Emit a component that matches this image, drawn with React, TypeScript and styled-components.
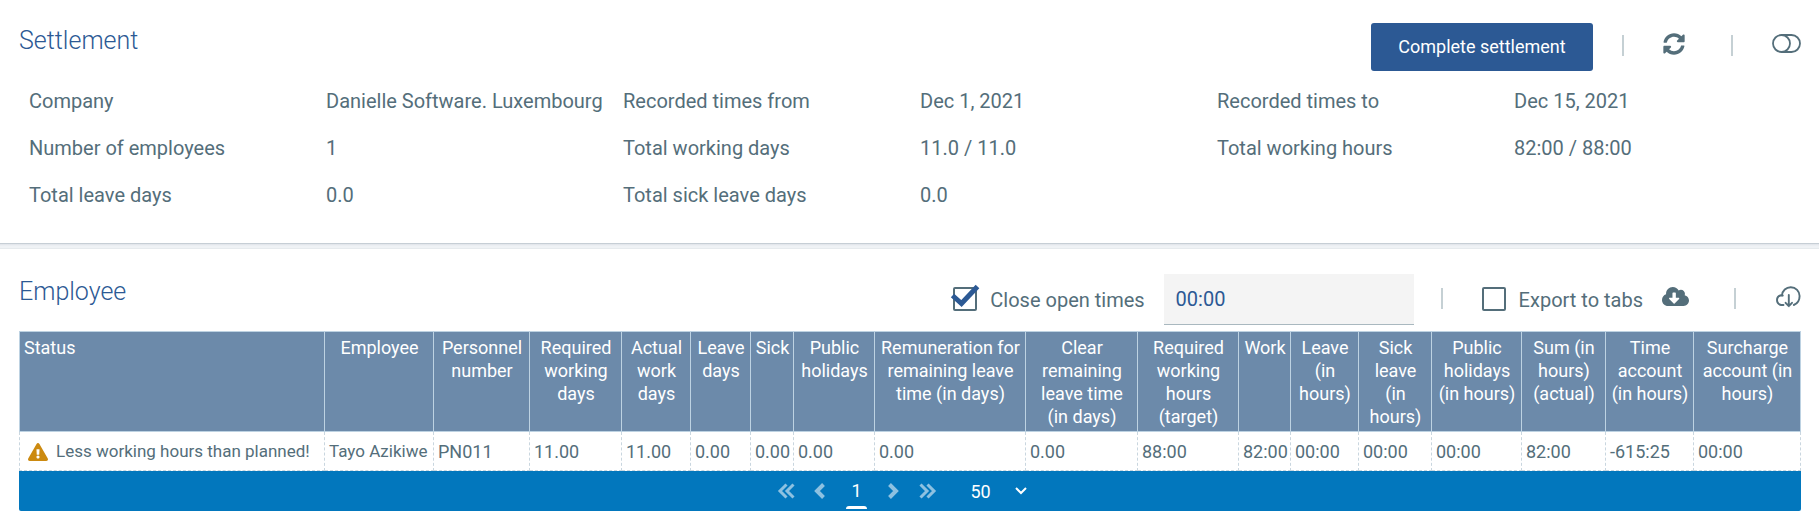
import React, { useState } from "react";
import styled, { createGlobalStyle, css } from "styled-components";
import { FaSyncAlt, FaCloudDownloadAlt, FaExclamationTriangle } from "react-icons/fa";

const GlobalStyle = createGlobalStyle`
  *, *::before, *::after { box-sizing: border-box; }
  body {
    margin: 0;
    background: #fff;
    color: #546e7a;
    font-family: Roboto, "Liberation Sans", sans-serif;
    font-size: 20px;
  }
  button, input, select { font: inherit; color: inherit; }
`;

const Section = styled.section<{ $top: number }>`
  padding: ${(p) => p.$top}px 18px 0 19px;
`;

const SectionHeader = styled.header<{ $height: number }>`
  display: flex;
  justify-content: space-between;
  align-items: flex-start;
  height: ${(p) => p.$height}px;
`;

const Title = styled.h2`
  margin: 0;
  font-size: 25px;
  font-weight: 300;
  line-height: 36px;
  color: #2c5994;
`;

const Toolbar = styled.div`
  display: flex;
  align-items: center;
`;

const PrimaryButton = styled.button`
  height: 48px;
  min-width: 222px;
  padding: 0 27px 2px;
  border: 0;
  border-radius: 3px;
  background: #2c5994;
  color: #fff;
  font-size: 18px;
  cursor: pointer;
`;

const Separator = styled.span<{ $left: number; $right: number }>`
  width: 2px;
  height: 21px;
  margin: 0 ${(p) => p.$right}px 3px ${(p) => p.$left}px;
  background: #c5d0d4;
`;

const IconButton = styled.button<{ $gap?: number }>`
  display: flex;
  padding: 0;
  margin: 0 0 6px ${(p) => p.$gap ?? 0}px;
  border: 0;
  background: none;
  cursor: pointer;
`;

const Facts = styled.dl`
  display: grid;
  grid-template-columns: repeat(6, 1fr);
  margin: 0;
  padding: 7px 0 24px;
`;

const cell = css`
  margin: 0;
  padding-left: 10px;
  line-height: 47px;
  white-space: nowrap;
`;
const Term = styled.dt`${cell}`;
const Value = styled.dd`${cell}`;

const Divider = styled.hr`
  height: 6px;
  margin: 0;
  border: 0;
  border-top: 1px solid #c6ced5;
  border-bottom: 1px solid #e6eaed;
  background: linear-gradient(#dfe3e8, #eff2f5 50%);
`;

const CheckLabel = styled.label`
  display: flex;
  align-items: center;
  gap: 13px;
  cursor: pointer;
`;

const CheckWrap = styled.span`
  position: relative;
  display: flex;
  margin-bottom: 2px;
`;

const CheckInput = styled.input`
  appearance: none;
  width: 24px;
  height: 24px;
  margin: 0;
  border: 2px solid #546e7a;
  border-radius: 2px;
  background: #fff;
`;

const Tick = styled.svg`
  position: absolute;
  left: -3px;
  top: -3px;
  pointer-events: none;
`;

const TimeInput = styled.input`
  width: 250px;
  height: 51px;
  margin: 0 0 0 19px;
  padding: 0 12px;
  border: 0;
  border-bottom: 1px solid #a9b8bf;
  background: #f4f4f4;
  color: #2c5994;
`;

const Table = styled.table`
  width: 100%;
  table-layout: fixed;
  border-collapse: separate;
  border-spacing: 0;
  font-size: 18px;
  line-height: 23px;
`;

const Th = styled.th`
  height: 101px;
  padding: 4px 3px 3px 4px;
  border: 1px solid #bdd2e2;
  border-left-width: 0;
  background: #6c8aaa;
  color: #fff;
  font-weight: 400;
  vertical-align: top;
  &:first-child {
    border-left-width: 1px;
    text-align: left;
  }
`;

const Td = styled.td<{ $words: boolean }>`
  height: 39px;
  padding: 1px 0 0 4px;
  border: 1px dashed #c9d6df;
  border-width: 0 1px 1px 0;
  font-size: ${(p) => (p.$words ? 17 : 18)}px;
  white-space: nowrap;
  &:first-child { border-left-width: 1px; }
`;

const Status = styled.span`
  display: flex;
  align-items: center;
  gap: 8px;
  padding-left: 4px;
`;

const Pager = styled.nav`
  display: flex;
  justify-content: center;
  align-items: center;
  height: 40px;
  border-radius: 0 0 2px 2px;
  background: #0277bd;
  color: #fff;
  font-size: 18px;
`;

const PageStep = styled.button`
  display: flex;
  justify-content: center;
  width: 34px;
  padding: 0;
  border: 0;
  background: none;
  opacity: 0.55;
`;

const Page = styled.button`
  display: flex;
  flex-direction: column;
  justify-content: flex-end;
  align-items: center;
  height: 40px;
  width: 40px;
  padding: 0 0 2px;
  border: 0;
  background: none;
  line-height: 30px;
  &::after {
    content: "";
    width: 21px;
    height: 3px;
    border-radius: 3px 3px 0 0;
    background: #fff;
  }
`;

const PageSize = styled.label`
  display: flex;
  align-items: center;
  margin-left: 26px;
  padding-right: 25px;
`;

const SizeSelect = styled.select`
  appearance: none;
  width: 44px;
  padding: 0;
  border: 0;
  background: transparent;
  color: #fff;
  option { color: #333; }
`;

const facts: [string, string][] = [
  ["Company", "Danielle Software. Luxembourg"],
  ["Recorded times from", "Dec 1, 2021"],
  ["Recorded times to", "Dec 15, 2021"],
  ["Number of employees", "1"],
  ["Total working days", "11.0 / 11.0"],
  ["Total working hours", "82:00 / 88:00"],
  ["Total leave days", "0.0"],
  ["Total sick leave days", "0.0"],
];

const columns: { name: string; width: number; value: string }[] = [
  { name: "Status", width: 306, value: "Less working hours than planned!" },
  { name: "Employee", width: 109, value: "Tayo Azikiwe" },
  { name: "Personnel number", width: 96, value: "PN011" },
  { name: "Required working days", width: 92, value: "11.00" },
  { name: "Actual work days", width: 69, value: "11.00" },
  { name: "Leave days", width: 60, value: "0.00" },
  { name: "Sick", width: 43, value: "0.00" },
  { name: "Public holidays", width: 81, value: "0.00" },
  { name: "Remuneration for remaining leave time (in days)", width: 151, value: "0.00" },
  { name: "Clear remaining leave time (in days)", width: 112, value: "0.00" },
  { name: "Required working hours (target)", width: 101, value: "88:00" },
  { name: "Work", width: 52, value: "82:00" },
  { name: "Leave (in hours)", width: 68, value: "00:00" },
  { name: "Sick leave (in hours)", width: 73, value: "00:00" },
  { name: "Public holidays (in hours)", width: 90, value: "00:00" },
  { name: "Sum (in hours) (actual)", width: 84, value: "82:00" },
  { name: "Time account (in hours)", width: 88, value: "-615:25" },
  { name: "Surcharge account (in hours)", width: 107, value: "00:00" },
];

const ToggleIcon = () => (
  <svg width="29" height="20" viewBox="0 0 29 20" fill="none" stroke="#546e7a" strokeWidth="1.8">
    <rect x="1" y="1" width="27" height="17" rx="8.5" />
    <path d="M9.5 1a8.500 8.500 0 0 1 0 17" />
  </svg>
);

const CloudOutlineIcon = () => (
  <svg width="26" height="22" viewBox="0 0 26 22" fill="none" stroke="#546e7a" strokeWidth="1.9" strokeLinecap="round" strokeLinejoin="round">
    <path d="M8.5 19H6A5 5 0 0 1 6 9.2c.6 0 1.2.1 1.7.4" />
    <path d="M7 9.4A8.7 8.7 0 0 1 15.8 1.2c5 0 8.8 4 8.8 8.8 0 4.200-2.200 7.600-5.800 9" />
    <path d="M13.8 9v11M10.6 16.8l3.200 3.400 3.200-3.400" />
  </svg>
);

const Chevrons = ({ double, right }: { double?: boolean; right?: boolean }) => (
  <svg width={double ? 18 : 11} height="16" viewBox={double ? "0 0 18 16" : "0 0 11 16"} fill="none" stroke="#fff" strokeWidth={double ? 3 : 4}>
    <g transform={right ? `translate(${double ? 18 : 11} 0) scale(-1 1)` : undefined}>
      <path d="M9.5 1.5L3 8l6.500 6.500" />
      {double && <path d="M16.5 1.5L10 8l6.500 6.500" />}
    </g>
  </svg>
);

function Checkbox({ label, initial }: { label: string; initial: boolean }) {
  const [on, setOn] = useState(initial);
  return (
    <CheckLabel>
      <CheckWrap>
        <CheckInput type="checkbox" checked={on} onChange={(e) => setOn(e.target.checked)} />
        {on && (
          <Tick width="30" height="24" viewBox="0 0 30 24" fill="none" stroke="#2c5994" strokeWidth="5">
            <path d="M2.5 11.5l9 8L27.5 2.5" />
          </Tick>
        )}
      </CheckWrap>
      {label}
    </CheckLabel>
  );
}

export default function App() {
  return (
    <>
      <GlobalStyle />
      <Section $top={23}>
        <SectionHeader $height={48}>
          <Title>Settlement</Title>
          <Toolbar>
            <PrimaryButton>Complete settlement</PrimaryButton>
            <Separator $left={29} $right={39} />
            <IconButton aria-label="Refresh"><FaSyncAlt size={22} /></IconButton>
            <Separator $left={46} $right={39} />
            <IconButton aria-label="Toggle view"><ToggleIcon /></IconButton>
          </Toolbar>
        </SectionHeader>
        <Facts>
          {facts.map(([term, value]) => (
            <React.Fragment key={term}>
              <Term>{term}</Term>
              <Value>{value}</Value>
            </React.Fragment>
          ))}
        </Facts>
      </Section>
      <Divider />
      <Section $top={25}>
        <SectionHeader $height={57}>
          <Title>Employee</Title>
          <Toolbar>
            <Checkbox label="Close open times" initial />
            <TimeInput aria-label="Closing time" defaultValue="00:00" />
            <Separator $left={27} $right={39} />
            <Checkbox label="Export to tabs" initial={false} />
            <IconButton $gap={19} aria-label="Download export"><FaCloudDownloadAlt size={27} /></IconButton>
            <Separator $left={45} $right={39} />
            <IconButton aria-label="Download"><CloudOutlineIcon /></IconButton>
          </Toolbar>
        </SectionHeader>
        <Table>
          <colgroup>
            {columns.map((c) => (
              <col key={c.name} style={{ width: c.width }} />
            ))}
          </colgroup>
          <thead>
            <tr>
              {columns.map((c) => (
                <Th key={c.name} scope="col">{c.name}</Th>
              ))}
            </tr>
          </thead>
          <tbody>
            <tr>
              {columns.map((c, i) => (
                <Td key={c.name} $words={i < 2}>
                  {i === 0 ? (
                    <Status><FaExclamationTriangle size={20} color="#cc8a10" />{c.value}</Status>
                  ) : (
                    c.value
                  )}
                </Td>
              ))}
            </tr>
          </tbody>
        </Table>
        <Pager aria-label="Pages">
          <PageStep aria-label="First page"><Chevrons double /></PageStep>
          <PageStep aria-label="Previous page"><Chevrons /></PageStep>
          <Page>1</Page>
          <PageStep aria-label="Next page"><Chevrons right /></PageStep>
          <PageStep aria-label="Last page"><Chevrons double right /></PageStep>
          <PageSize>
            <SizeSelect aria-label="Rows per page" defaultValue="50">
              <option>50</option>
              <option>100</option>
            </SizeSelect>
            <svg width="12" height="8" viewBox="0 0 12 8" fill="none" stroke="#fff" strokeWidth="2">
              <path d="M1 1l5 5 5-5" />
            </svg>
          </PageSize>
        </Pager>
      </Section>
    </>
  );
}
